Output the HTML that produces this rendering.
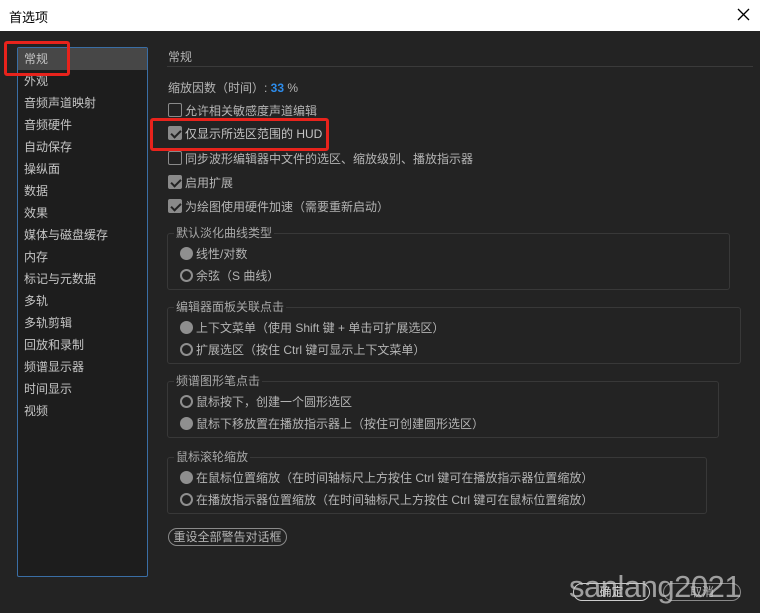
<!DOCTYPE html>
<html><head><meta charset="utf-8"><style>
*{margin:0;padding:0;box-sizing:border-box}
body{width:760px;height:613px;background:#232323;font-family:"Liberation Sans","Noto Sans CJK SC",sans-serif;font-size:12px;color:#b4b4b4;position:relative;overflow:hidden}
.a{position:absolute;white-space:nowrap}
#title{left:0;top:0;width:760px;height:31px;background:#fff;color:#000;font-size:13px}
#title span{position:absolute;left:9px;top:7px}
#list{left:17px;top:47px;width:131px;height:530px;border:1px solid #3a6ea5;border-radius:2px;background:#1d1d1d}
.li{position:absolute;left:6px;height:22px;line-height:22px;color:#c4c4c4}
.cb{width:14px;height:14px;border:1px solid #8a8a8a;border-radius:2px;background:#232323}
.cb.on{background:#8a8a8a}
.cb.on::after{content:"";position:absolute;left:4px;top:1px;width:4px;height:8px;border:solid #232323;border-width:0 2px 2px 0;transform:rotate(45deg)}
.grp{border:1px solid #383838;border-radius:3px}
.lg{background:#232323;padding:0 2px;color:#a8a8a8}
.rd{width:13px;height:13px;border-radius:50%;border:2px solid #8f8f8f}
.rd.on{background:#8f8f8f;border-color:#8f8f8f}
.red{border:3px solid #e8231c;border-radius:3px}
.btn{border:1px solid #8a8a8a;border-radius:9px;height:18px;line-height:16px;text-align:center;color:#b4b4b4}
</style></head><body>
<div class="a" id="title"><span>首选项</span>
<svg style="position:absolute;left:737px;top:8px" width="13" height="13"><path d="M1 1L12 12M12 1L1 12" stroke="#000" stroke-width="1.3"/></svg></div>
<div class="a" id="list">
<div class="a" style="left:0;top:0;width:129px;height:22px;background:#474747"></div>
<div class="li" style="top:0">常规</div>
<div class="li" style="top:22px">外观</div>
<div class="li" style="top:44px">音频声道映射</div>
<div class="li" style="top:66px">音频硬件</div>
<div class="li" style="top:88px">自动保存</div>
<div class="li" style="top:110px">操纵面</div>
<div class="li" style="top:132px">数据</div>
<div class="li" style="top:154px">效果</div>
<div class="li" style="top:176px">媒体与磁盘缓存</div>
<div class="li" style="top:198px">内存</div>
<div class="li" style="top:220px">标记与元数据</div>
<div class="li" style="top:242px">多轨</div>
<div class="li" style="top:264px">多轨剪辑</div>
<div class="li" style="top:286px">回放和录制</div>
<div class="li" style="top:308px">频谱显示器</div>
<div class="li" style="top:330px">时间显示</div>
<div class="li" style="top:352px">视频</div>
</div>
<div class="a red" style="left:4px;top:41px;width:66px;height:35px"></div>

<div class="a" style="left:168px;top:48px">常规</div>
<div class="a" style="left:167px;top:66px;width:586px;height:1px;background:#3a3a3a"></div>
<div class="a" style="left:168px;top:79px">缩放因数（时间）: <b style="color:#2d8ceb">33</b> %</div>

<div class="a cb" style="left:168px;top:103px"></div><div class="a" style="left:185px;top:102px">允许相关敏感度声道编辑</div>
<div class="a cb on" style="left:168px;top:126px"></div><div class="a" style="left:185px;top:125px;color:#c4c4c4">仅显示所选区范围的 HUD</div>
<div class="a cb" style="left:168px;top:151px"></div><div class="a" style="left:185px;top:150px">同步波形编辑器中文件的选区、缩放级别、播放指示器</div>
<div class="a cb on" style="left:168px;top:175px"></div><div class="a" style="left:185px;top:174px">启用扩展</div>
<div class="a cb on" style="left:168px;top:199px"></div><div class="a" style="left:185px;top:198px">为绘图使用硬件加速（需要重新启动）</div>
<div class="a red" style="left:150px;top:118px;width:179px;height:33px"></div>

<div class="a grp" style="left:167px;top:233px;width:563px;height:57px"></div>
<div class="a lg" style="left:174px;top:224px">默认淡化曲线类型</div>
<div class="a rd on" style="left:180px;top:247px"></div><div class="a" style="left:196px;top:245px">线性/对数</div>
<div class="a rd" style="left:180px;top:269px"></div><div class="a" style="left:196px;top:267px">余弦（S 曲线）</div>

<div class="a grp" style="left:167px;top:307px;width:574px;height:57px"></div>
<div class="a lg" style="left:174px;top:298px">编辑器面板关联点击</div>
<div class="a rd on" style="left:180px;top:321px"></div><div class="a" style="left:196px;top:319px">上下文菜单（使用 Shift 键 + 单击可扩展选区）</div>
<div class="a rd" style="left:180px;top:343px"></div><div class="a" style="left:196px;top:341px">扩展选区（按住 Ctrl 键可显示上下文菜单）</div>

<div class="a grp" style="left:167px;top:381px;width:552px;height:57px"></div>
<div class="a lg" style="left:174px;top:372px">频谱图形笔点击</div>
<div class="a rd" style="left:180px;top:395px"></div><div class="a" style="left:196px;top:393px">鼠标按下，创建一个圆形选区</div>
<div class="a rd on" style="left:180px;top:417px"></div><div class="a" style="left:196px;top:415px">鼠标下移放置在播放指示器上（按住可创建圆形选区）</div>

<div class="a grp" style="left:167px;top:457px;width:540px;height:57px"></div>
<div class="a lg" style="left:174px;top:448px">鼠标滚轮缩放</div>
<div class="a rd on" style="left:180px;top:471px"></div><div class="a" style="left:196px;top:469px">在鼠标位置缩放（在时间轴标尺上方按住 Ctrl 键可在播放指示器位置缩放）</div>
<div class="a rd" style="left:180px;top:493px"></div><div class="a" style="left:196px;top:491px">在播放指示器位置缩放（在时间轴标尺上方按住 Ctrl 键可在鼠标位置缩放）</div>

<div class="a btn" style="left:168px;top:528px;width:119px">重设全部警告对话框</div>
<div class="a btn" style="left:573px;top:583px;width:77px;border-color:#ccc;color:#ddd">确定</div>
<div class="a btn" style="left:663px;top:583px;width:78px">取消</div>
<div class="a" style="left:569px;top:569px;font-size:31px;color:rgba(200,200,200,0.75);font-family:'Liberation Sans',sans-serif;letter-spacing:-0.5px">sanlang2021</div>
</body></html>
